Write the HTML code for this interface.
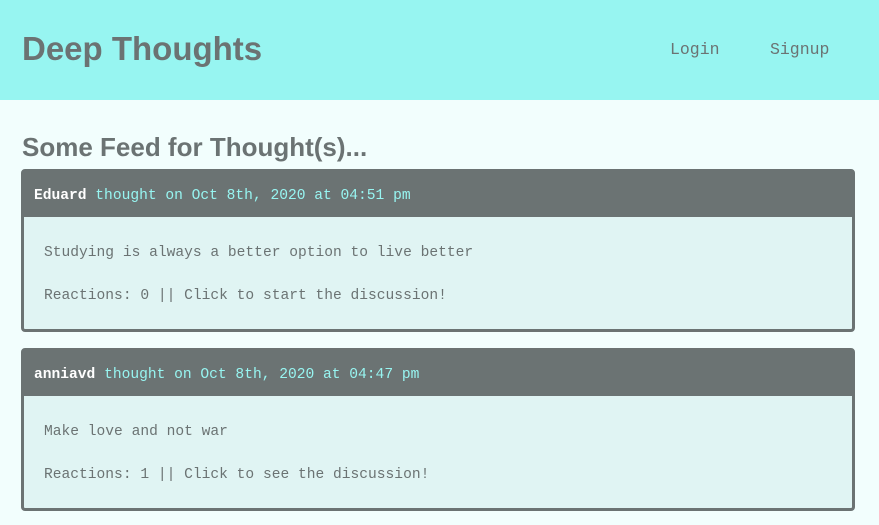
<!DOCTYPE html>
<html><head><style>
body{margin:0;background:#f2fefd;font-family:"Liberation Sans",sans-serif;}
header{height:100px;background:#97f5f1;position:relative;}
h1{margin:0;position:absolute;left:22px;top:30px;font-size:33px;color:#6b7373;font-weight:bold;}
nav{position:absolute;top:40px;font-family:"Liberation Mono",monospace;font-size:16.5px;color:#6b7373;}
h2{margin:0;position:absolute;left:22px;top:132px;font-size:26px;color:#6b7373;}
.card{position:absolute;left:21px;width:828px;border:3px solid #6b7373;border-radius:4px;background:#e0f4f3;font-family:"Liberation Mono",monospace;font-size:14.6px;}
.hd{background:#6b7373;height:46px;line-height:50px;padding-left:10px;color:#97f5f1;margin-top:-1px;}
.hd b{color:#fff;}
.bd{color:#6b7373;padding-left:20px;}
.bd p{margin:0;position:absolute;left:20px;}
</style></head><body>
<header><h1>Deep Thoughts</h1><nav style="left:670px">Login</nav><nav style="left:770px">Signup</nav></header>
<h2>Some Feed for Thought(s)...</h2>
<div class="card" style="top:169px;height:157px">
<div class="hd"><b>Eduard</b> thought on Oct 8th, 2020 at 04:51 pm</div>
<div class="bd"><p style="top:73px">Studying is always a better option to live better</p><p style="top:116px">Reactions: 0 || Click to start the discussion!</p></div>
</div>
<div class="card" style="top:348px;height:157px">
<div class="hd"><b>anniavd</b> thought on Oct 8th, 2020 at 04:47 pm</div>
<div class="bd"><p style="top:73px">Make love and not war</p><p style="top:116px">Reactions: 1 || Click to see the discussion!</p></div>
</div>
</body></html>
